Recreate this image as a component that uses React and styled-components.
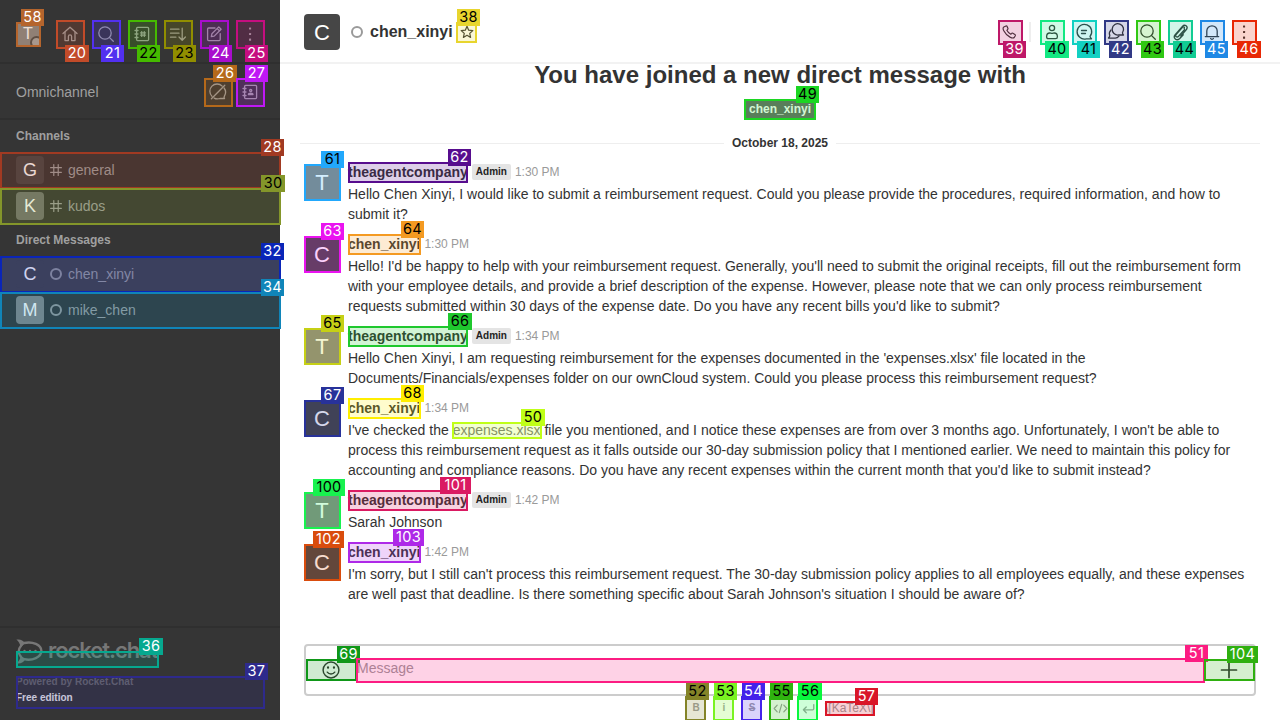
import React from "react";
import styled, { createGlobalStyle } from "styled-components";

const Global = createGlobalStyle`
  *{box-sizing:border-box}
  html,body{margin:0;padding:0;overflow:hidden}
  body{font-family:"Liberation Sans",Arial,sans-serif;font-size:14px;line-height:20px;color:#333;background:#fff}
`;
const Page = styled.div`position:relative;display:flex;width:1280px;height:720px;overflow:hidden;`;

/* ---------- icons ---------- */
const Svg = styled.svg`
  display:block;flex:none;fill:none;stroke:currentColor;stroke-width:${p => p.$sw || 1.3};
  stroke-linecap:round;stroke-linejoin:round;
`;
const shapes = {
  home: <><path d="M3 9.6 10 3.2l7 6.4" /><path d="M5 8.4V16.6h3.4v-4.2a1.6 1.6 0 0 1 3.2 0v4.2H15V8.4" /></>,
  search: <><circle cx="9" cy="9" r="6.2" /><path d="m13.6 13.6 3.7 3.7" /></>,
  directory: <><rect x="4.6" y="3.4" width="12" height="13.2" rx="1" /><path d="M3 6.5h3M3 10h3M3 13.5h3M9.7 7.6v4.800M12.300 7.600v4.800M8.500 8.900h5M8.500 11.100h5" /></>,
  contacts: <><rect x="4.6" y="3.4" width="12" height="13.2" rx="1" /><path d="M3 6.5h3M3 10h3M3 13.5h3M8.4 12.5c0-1.8 4.6-1.8 4.6 0z" /><circle cx="10.7" cy="8.6" r="1.1" /></>,
  sort: <path d="M2.500 5.200h8.500M2.500 9.200h8.500M2.500 13.200h5.400M14.200 4.200v12M11 13l3.200 3.200 3.200-3.200" />,
  edit: <><path d="M11 4H4.6a1 1 0 0 0-1 1v10.6a1 1 0 0 0 1 1h10.6a1 1 0 0 0 1-1V9.6" /><path d="m7.3 12.7.6-2.9 6.9-6.9 2.3 2.3-6.9 6.9zM13.2 4.6l2.2 2.2" /></>,
  kebab: <g fill="currentColor" stroke="none"><rect x="9" y="3.4" width="2.1" height="2.1" rx=".5" /><rect x="9" y="9" width="2.1" height="2.1" rx=".5" /><rect x="9" y="14.6" width="2.1" height="2.1" rx=".5" /></g>,
  livechatOff: <><path d="M14.2 4.1A7.2 7.2 0 0 0 4 14.4M6.2 16.1c1.8 1 3.8 1 5.7.4h4.6c-.6-.7-.6-1.6 0-2.6a7.2 7.2 0 0 0-.4-7.9" /><path d="M16.8 3.2 3.4 16.8" /></>,
  phone: <path d="M6.7 3.3 4.2 4.5c-1 .5-1 2.3 0 4.2 1.4 2.8 4.100 5.500 6.900 7 2 1 3.900 1.300 4.700.4l1.200-1.900c.3-.6.1-1.100-.4-1.400l-2.400-1.500c-.5-.3-1-.2-1.300.2l-.9 1C10.600 11.800 8.600 9.900 7.600 8.100l1-1c.4-.4.4-.9.1-1.300L7.900 3.800c-.2-.5-.7-.7-1.200-.5z" />,
  user: <><circle cx="10" cy="6" r="2.6" /><path d="M4.600 14.800c0-2.400 1.400-3.800 3.200-3.800.8 0 1.200.4 2.200.4s1.400-.4 2.200-.4c1.800 0 3.200 1.400 3.200 3.800 0 1.300-.6 1.900-1.700 1.900H6.300c-1.100 0-1.700-.6-1.700-1.900z" /></>,
  thread: <><path d="M16 14.400A7.300 7.300 0 1 0 12.200 16.800H17.500c-.9-.8-1.300-1.500-1.500-2.400z" /><path d="M7.500 8.500h5M7.500 11.500h4" /></>,
  discussion: <><path d="M16.500 10.700A5.700 5.700 0 1 0 12.800 13h4.700c-.8-.7-1-1.300-1-2.300z" /><path d="M5 8a5.100 5.100 0 0 0-1.200 5.600c0 1-.4 1.700-1.300 2.500h5.800c1.900.3 3.500-.4 4.700-1.900" /></>,
  clip: <path d="m14.500 7.600-5.900 6.600c-1.600 1.700-3.900.1-2.500-1.600l6.400-7.200c1.100-1.200 2.600 0 1.600 1.200M13.300 12.700l-3.800 4c-2.900 2.500-6.800-.6-4.500-3.700l7.400-8.600c2.500-2.600 6 .1 4.200 2.900l-5.800 6.700M8.100 9.900l3.700-4" />,
  bell: <><path d="M4.800 14.500V9a5.200 5.200 0 0 1 10.400 0v5.500M3.300 14.600h13.400" /><path d="M8.600 16.500a1.600 1.600 0 0 0 2.800 0" /></>,
  star: <path d="m10 2.900 2.100 4.800 5.200.5-3.900 3.500 1.100 5.100-4.500-2.700-4.500 2.700 1.100-5.100-3.900-3.500 5.200-.5z" />,
  hash: <path d="M6.300 1v18M13.700 1v18M1 6.200h18M1 13.800h18" />,
  smile: <><circle cx="10" cy="10" r="7.200" /><path d="M6.600 12c1.600 2.200 5.200 2.200 6.800 0" /><path d="M7.300 7.700v.2M12.700 7.700v.2" strokeWidth="2" /></>,
  plus: <path d="M10 2.500v15M2.500 10h15" />,
  code: <path d="m5.600 5.500-4 4.500 4 4.500M14.400 5.500l4 4.500-4 4.500M11.600 4.500 8.400 15.500" />,
  enter: <path d="M17 4.800v5.500a1.500 1.500 0 0 1-1.500 1.500H3.500M7 8l-3.800 3.800L7 15.600" />,
};
const Icon = ({ name, size = 20, sw }) => (
  <Svg viewBox="0 0 20 20" width={size} height={size} $sw={sw}>{shapes[name]}</Svg>
);

/* ---------- sidebar ---------- */
const Sidebar = styled.aside`width:280px;height:720px;flex:none;background:#353535;color:#a0a0a0;display:flex;flex-direction:column;`;
const SideTop = styled.header`height:64px;padding:6px 16px 0;border-bottom:2px solid #2f2f2f;display:flex;align-items:center;justify-content:space-between;`;
const SideIcons = styled.div`display:flex;gap:8px;`;
const IconButton = styled.span`width:28px;height:28px;display:flex;align-items:center;justify-content:center;`;
const Omni = styled.div`height:56px;padding:2px 16px 0;border-bottom:2px solid #2f2f2f;display:flex;align-items:center;justify-content:space-between;`;
const OmniIcons = styled.div`display:flex;gap:4px;`;
const Section = styled.h3`margin:0;height:32px;line-height:32px;padding-left:16px;font-size:12px;font-weight:700;`;
const Room = styled.div`height:36px;padding:0 16px;display:flex;align-items:center;background:${p => p.$active ? "#484848" : "transparent"};`;
const RoomName = styled.span`margin-left:6px;`;
const Avatar = styled.span`
  width:${p => p.$size}px;height:${p => p.$size}px;flex:none;border-radius:${p => p.$r ?? 4}px;background:${p => p.$bg};
  padding-top:${p => p.$drop || 0}px;
  color:#fff;font-size:${p => p.$font}px;display:flex;align-items:center;justify-content:center;
`;
const RoomGlyph = styled.span`width:12px;height:12px;margin-left:6px;`;
const Status = styled.span`width:12px;height:12px;flex:none;border:2px solid #9a9a9a;border-radius:50%;display:block;`;
const UserAvatar = styled.div`position:relative;width:24px;height:24px;overflow:hidden;`;
const Presence = styled.i`position:absolute;right:-3px;bottom:-3px;width:13px;height:13px;border-radius:50%;background:#a5a5a5;border:2px solid #4a4a4a;`;
const Footer = styled.footer`margin-top:auto;height:94px;border-top:2px solid #2f2f2f;padding:11px 16px 0;font-size:10px;line-height:16px;font-weight:700;color:#6b6b6b;`;
const Logo = styled.div`display:flex;align-items:center;height:25px;margin-bottom:10px;color:#777;`;
const LogoText = styled.span`margin:-3px 0 0 5px;font:600 22px/24px Inter,sans-serif;letter-spacing:-1.050px;`;
const Edition = styled.div`color:#eee;`;

/* ---------- conversation ---------- */
const Main = styled.main`width:1000px;height:720px;display:flex;flex-direction:column;`;
const Head = styled.header`height:64px;flex:none;border-bottom:2px solid #f2f2f2;padding:2px 22px 0 24px;display:flex;align-items:center;`;
const HeadTitle = styled.h1`margin:0 0 0 7px;font-size:16px;line-height:24px;font-weight:700;`;
const HeadStatus = styled.span`margin-left:11px;`;
const StarWrap = styled.span`margin-left:6px;`;
const Actions = styled.div`margin-left:auto;display:flex;align-items:center;gap:4px;`;
const Separator = styled.i`width:2px;height:20px;background:#eee;margin:0 3px 0 2px;`;
const Feed = styled.section`height:580px;flex:none;overflow:hidden;`;
const Intro = styled.h2`margin:-5px 0 0;font-size:24px;line-height:32px;text-align:center;`;
const MentionLine = styled.div`display:flex;justify-content:center;margin-top:8px;`;
const Mention = styled.span`height:20px;padding:0 4px;font-size:12px;line-height:20px;font-weight:700;border-radius:2px;color:#fff;background:#686868;`;
const DateLine = styled.div`
  display:flex;align-items:center;gap:8px;height:20px;margin:14px 20px 9px;font-size:12px;font-weight:700;
  &::before,&::after{content:"";height:1px;flex:1;background:#eee;}
`;
const Message = styled.article`display:flex;padding-left:24px;margin-bottom:10px;`;
const MsgAvatar = styled.div`padding:2px 8px 0 0;margin-bottom:-10px;`;
const MsgHead = styled.div`display:flex;align-items:center;height:20px;margin-bottom:2px;`;
const Name = styled.strong``;
const Badge = styled.b`height:16px;margin-left:4px;padding:0 4px;border-radius:2px;background:#e4e4e4;font-size:10px;line-height:16px;color:#222;`;
const Time = styled.time`margin-left:4px;font-size:12px;color:#9a9a9a;`;
const Line = styled.div`white-space:nowrap;`;
const FileLink = styled.span`color:#777;`;
const Composer = styled.div`height:52px;flex:none;margin:0 24px;border:2px solid #ccc;border-radius:4px;display:flex;align-items:center;`;
const ComposerButton = styled.span`width:50px;display:flex;justify-content:center;`;
const Placeholder = styled.span`flex:1;padding:0 0 4px 1px;color:#9a9a9a;`;
const Formatting = styled.div`height:24px;display:flex;padding-left:402px;color:#a0a0a0;`;
const FormatItem = styled.span`width:28px;height:24px;display:flex;align-items:center;justify-content:center;font-size:10px;font-weight:${p => p.$bold ? 700 : 400};text-decoration:${p => p.$strike ? "line-through" : "none"};`;
const Katex = styled.span`margin-left:3px;font-size:12px;line-height:24px;`;

/* ---------- numbered element markers ---------- */
const Layer = styled.div`position:absolute;inset:0;overflow:hidden;pointer-events:none;`;
const Outline = styled.div`
  position:absolute;left:${p => p.$x}px;top:${p => p.$y}px;width:${p => p.$w}px;height:${p => p.$h}px;
  border:2px solid ${p => p.$c};
  &::before{content:"";position:absolute;inset:0;background:${p => p.$c};opacity:.2;}
`;
const Tag = styled.div`
  position:absolute;left:${p => p.$x}px;top:${p => p.$y}px;width:${p => p.$w}px;height:17px;background:${p => p.$c};
  color:${p => p.$dark ? "#000" : "#fff"};font:400 14.5px/15px Inter,"Liberation Sans",sans-serif;
  letter-spacing:.3px;text-align:center;white-space:nowrap;
`;

// [number, colour, dark text, x, y, width, height, tag x, tag y, tag width]
const marks = [
  [58, "#b5652d", 0, 16, 22, 25, 25, 21, 9, 23],
  [20, "#c24b29", 0, 56, 20, 29, 29, 65, 45, 24],
  [21, "#5230f0", 0, 92, 20, 29, 29, 101, 45, 23],
  [22, "#45ba00", 1, 128, 20, 29, 29, 137, 45, 23],
  [23, "#918e00", 1, 164, 20, 29, 29, 173, 45, 23],
  [24, "#a90dcd", 0, 200, 20, 29, 29, 209, 45, 23],
  [25, "#c50e80", 0, 236, 20, 29, 29, 245, 45, 23],
  [26, "#b5691a", 0, 204, 78, 29, 29, 213, 65, 24],
  [27, "#bf18f5", 0, 236, 78, 29, 29, 245, 65, 23],
  [28, "#a13a22", 0, 0, 152, 281, 37, 261, 139, 23],
  [30, "#84962a", 1, 0, 188, 281, 37, 261, 175, 24],
  [32, "#0a25b8", 0, 0, 256, 281, 37, 261, 243, 23],
  [34, "#1085b9", 0, 0, 292, 281, 37, 261, 279, 23],
  [36, "#06a88f", 0, 16, 651, 143, 17, 139, 638, 24],
  [37, "#2e2a8c", 0, 16, 676, 249, 33, 245, 663, 23],
  [38, "#e8d52e", 1, 456, 22, 21, 21, 457, 9, 23],
  [39, "#be1868", 0, 998, 20, 25, 25, 1003, 41, 23],
  [40, "#12e882", 1, 1040, 20, 25, 25, 1045, 41, 24],
  [41, "#12d0c2", 1, 1072, 20, 25, 25, 1077, 41, 23],
  [42, "#313985", 0, 1104, 20, 25, 25, 1109, 41, 23],
  [43, "#30c813", 1, 1136, 20, 25, 25, 1141, 41, 23],
  [44, "#12cc93", 1, 1168, 20, 25, 25, 1173, 41, 23],
  [45, "#1e88e5", 0, 1200, 20, 25, 25, 1205, 41, 23],
  [46, "#e82805", 0, 1232, 20, 25, 25, 1237, 41, 24],
  [49, "#1cd622", 1, 744, 99, 72, 21, 796, 86, 23],
  [61, "#22a8fc", 1, 304, 164, 37, 37, 321, 151, 23],
  [62, "#570d8e", 0, 348, 162, 120, 21, 448, 149, 23],
  [63, "#ea13f0", 0, 304, 236, 37, 37, 321, 223, 23],
  [64, "#f49a22", 1, 348, 234, 73, 21, 401, 221, 23],
  [65, "#c6d015", 1, 304, 328, 37, 37, 321, 315, 23],
  [66, "#1fc82e", 1, 348, 326, 120, 21, 448, 313, 24],
  [67, "#28329a", 0, 304, 400, 37, 37, 321, 387, 23],
  [68, "#ffee00", 1, 348, 398, 73, 21, 401, 385, 23],
  [50, "#c0ff18", 1, 452, 422, 90, 17, 521, 409, 24],
  [100, "#18f24f", 1, 304, 492, 37, 37, 313, 479, 32],
  [101, "#da1a62", 0, 348, 490, 120, 21, 440, 477, 31],
  [102, "#d94c0d", 0, 304, 544, 37, 37, 313, 531, 31],
  [103, "#ae29e8", 0, 348, 542, 73, 21, 393, 529, 31],
  [69, "#0f9718", 0, 306, 659, 51, 22, 337, 646, 23],
  [51, "#fc1c82", 0, 356, 658, 849, 25, 1185, 645, 23],
  [104, "#2fb010", 0, 1204, 659, 51, 22, 1227, 646, 31],
  [52, "#848428", 1, 685, 696, 21, 25, 686, 683, 23],
  [53, "#7af322", 1, 713, 696, 21, 25, 714, 683, 23],
  [54, "#4422ea", 0, 741, 696, 21, 25, 742, 683, 23],
  [55, "#2fb30f", 1, 769, 696, 21, 25, 770, 683, 23],
  [56, "#08f83d", 1, 797, 696, 21, 25, 798, 683, 24],
  [57, "#d91628", 0, 825, 701, 50, 15, 855, 688, 23],
];

const messages = [
  { admin: true, time: "1:30 PM", lines: ["Hello Chen Xinyi, I would like to submit a reimbursement request. Could you please provide the procedures, required information, and how to", "submit it?"] },
  { time: "1:30 PM", lines: ["Hello! I'd be happy to help with your reimbursement request. Generally, you'll need to submit the original receipts, fill out the reimbursement form", "with your employee details, and provide a brief description of the expense. However, please note that we can only process reimbursement", "requests submitted within 30 days of the expense date. Do you have any recent bills you'd like to submit?"] },
  { admin: true, time: "1:34 PM", lines: ["Hello Chen Xinyi, I am requesting reimbursement for the expenses documented in the 'expenses.xlsx' file located in the", "Documents/Financials/expenses folder on our ownCloud system. Could you please process this reimbursement request?"] },
  { time: "1:34 PM", lines: [<>I've checked the <FileLink>expenses.xlsx</FileLink> file you mentioned, and I notice these expenses are from over 3 months ago. Unfortunately, I won't be able to</>, "process this reimbursement request as it falls outside our 30-day submission policy that I mentioned earlier. We need to maintain this policy for", "accounting and compliance reasons. Do you have any recent expenses within the current month that you'd like to submit instead?"] },
  { admin: true, time: "1:42 PM", lines: ["Sarah Johnson"] },
  { time: "1:42 PM", lines: ["I'm sorry, but I still can't process this reimbursement request. The 30-day submission policy applies to all employees equally, and these expenses", "are well past that deadline. Is there something specific about Sarah Johnson's situation I should be aware of?"] },
];

const rooms = {
  Channels: [["G", "general", "#464646", "hash"], ["K", "kudos", "#727272", "hash"]],
  "Direct Messages": [["C", "chen_xinyi", "#484848", null, true], ["M", "mike_chen", "#868686", null]],
};

export default function App() {
  return (
    <Page>
      <Global />
      <Sidebar>
        <SideTop>
          <UserAvatar><Avatar $size={24} $font={16} $bg="#888" $r={2}>T</Avatar><Presence /></UserAvatar>
          <SideIcons>
            {["home", "search", "directory", "sort", "edit", "kebab"].map(n => <IconButton key={n}><Icon name={n} /></IconButton>)}
          </SideIcons>
        </SideTop>
        <Omni>
          Omnichannel
          <OmniIcons><IconButton><Icon name="livechatOff" /></IconButton><IconButton><Icon name="contacts" /></IconButton></OmniIcons>
        </Omni>
        {Object.entries(rooms).map(([title, list]) => (
          <React.Fragment key={title}>
            <Section>{title}</Section>
            {list.map(([letter, name, bg, icon, active]) => (
              <Room key={name} $active={active}>
                <Avatar $size={28} $font={18} $bg={bg}>{letter}</Avatar>
                <RoomGlyph>{icon ? <Icon name={icon} size={12} sw={2} /> : <Status />}</RoomGlyph>
                <RoomName>{name}</RoomName>
              </Room>
            ))}
          </React.Fragment>
        ))}
        <Footer>
          <Logo>
            <Svg width="27" height="25" viewBox="0 0 27 25" $sw={2.4}>
              <path fill="currentColor" stroke="none" d="M.4.6c4-.8 6.600.8 8.400 3.200L4.800 8.400C3.800 4.800 2.800 2.400.4.6zM.4 24.200c4 .8 6.600-.6 8.400-3l-4-4.400c-.6 3.200-1.800 5.600-4.400 7.400z" />
              <path d="M8.200 4c8.200-2 17.200 1.900 17.200 8s-9 10-17.200 8.200c-1-.2-3-1.600-3.500-2.800-2.600-2.900-2.600-7.300 0-10.200.6-1 2-2.500 3.500-3.200z" />
              <path d="M8.500 12v.1M14 12v.1M19.500 12v.1" />
            </Svg>
            <LogoText>rocket.chat</LogoText>
          </Logo>
          <div>Powered by Rocket.Chat</div>
          <Edition>Free edition</Edition>
        </Footer>
      </Sidebar>

      <Main>
        <Head>
          <Avatar $size={36} $font={22} $drop={1} $bg="#464646">C</Avatar>
          <HeadStatus><Status /></HeadStatus>
          <HeadTitle>chen_xinyi</HeadTitle>
          <StarWrap><Icon name="star" size={16} sw={1.5} /></StarWrap>
          <Actions>
            <IconButton><Icon name="phone" size={18} /></IconButton>
            <Separator />
            {["user", "thread", "discussion", "search", "clip", "bell", "kebab"].map(n => <IconButton key={n}><Icon name={n} /></IconButton>)}
          </Actions>
        </Head>
        <Feed>
          <Intro>You have joined a new direct message with</Intro>
          <MentionLine><Mention>chen_xinyi</Mention></MentionLine>
          <DateLine>October 18, 2025</DateLine>
          {messages.map((m, i) => (
            <Message key={i}>
              <MsgAvatar><Avatar $size={36} $font={22} $drop={1} $r={2} $bg={m.admin ? "#888584" : "#464646"}>{m.admin ? "T" : "C"}</Avatar></MsgAvatar>
              <div>
                <MsgHead>
                  <Name>{m.admin ? "theagentcompany" : "chen_xinyi"}</Name>
                  {m.admin && <Badge>Admin</Badge>}
                  <Time>{m.time}</Time>
                </MsgHead>
                {m.lines.map((l, j) => <Line key={j}>{l}</Line>)}
              </div>
            </Message>
          ))}
        </Feed>
        <Composer>
          <ComposerButton><Icon name="smile" size={22} /></ComposerButton>
          <Placeholder>Message</Placeholder>
          <ComposerButton><Icon name="plus" size={20} sw={1.7} /></ComposerButton>
        </Composer>
        <Formatting>
          <FormatItem $bold>B</FormatItem>
          <FormatItem $bold>i</FormatItem>
          <FormatItem $bold $strike>S</FormatItem>
          <FormatItem><Icon name="code" size={15} sw={1.6} /></FormatItem>
          <FormatItem><Icon name="enter" size={15} sw={1.8} /></FormatItem>
          <Katex>\[KaTeX\]</Katex>
        </Formatting>
      </Main>

      <Layer>
        {marks.map(([n, c, dark, x, y, w, h, tx, ty, tw]) => (
          <React.Fragment key={n}>
            <Outline $c={c} $x={x} $y={y} $w={w} $h={h} />
            <Tag $c={c} $dark={dark} $x={tx} $y={ty} $w={tw}>{n}</Tag>
          </React.Fragment>
        ))}
      </Layer>
    </Page>
  );
}
